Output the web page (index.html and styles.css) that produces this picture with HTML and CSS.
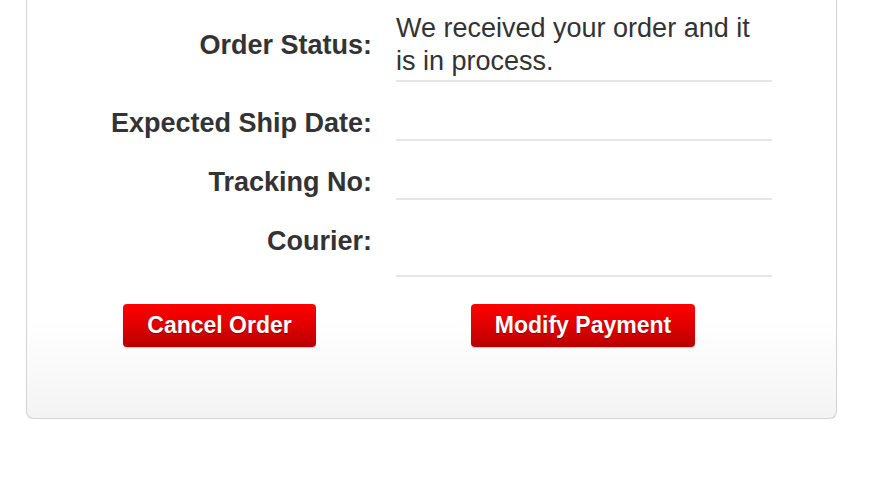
FILE: index.html
```html
<!DOCTYPE html>
<html>
<head>
    <title>Order Details</title>
<link rel="stylesheet" href="styles.css">
</head>
<body>
    <div class="panel">
        <div class="row row-first">
            <div class="label">Order Status:</div>
            <div class="value">We received your order and it is in process.</div>
        </div>
        <div class="row">
            <div class="label">Expected Ship Date:</div>
            <div class="value"></div>
        </div>
        <div class="row">
            <div class="label">Tracking No:</div>
            <div class="value"></div>
        </div>
        <div class="row row-last">
            <div class="label">Courier:</div>
            <div class="value"></div>
        </div>
        <div class="buttons">
            <button class="btn btn-cancel">Cancel Order</button>
            <button class="btn btn-modify">Modify Payment</button>
        </div>
        <div class="panel-foot"></div>
    </div>
</body>
</html>
```

FILE: styles.css
```css
body {
  margin: 0;
  font-family: "Liberation Sans", Arial, sans-serif;
  color: #333;
  background: #fff;
}

.panel {
  width: 809px;
  margin-left: 26px;
  border: 1px solid #d4d4d4;
  border-top: none;
  border-radius: 0 0 8px 8px;
  background: linear-gradient(to bottom, #fff 0, #fff 320px, #f3f3f3 100%);
  box-shadow: 0 1px 1px #e6e6e6;
}

.row {
  display: grid;
  grid-template-columns: 345px 376px;
  column-gap: 24px;
}

.label {
  font-size: 27px;
  font-weight: bold;
  line-height: 28px;
  text-align: right;
  padding-top: 27px;
}

.value {
  font-size: 27px;
  line-height: 33px;
  height: 57px;
  border-bottom: 2px solid #e6e6e6;
}

.row-first .label {
  padding-top: 31px;
}

.row-first .value {
  padding-top: 12px;
  height: 68px;
}

.row-last .value {
  height: 75px;
}

.buttons {
  display: flex;
  padding-top: 27px;
  padding-left: 96px;
}

.btn {
  height: 43px;
  border: none;
  border-radius: 4px;
  background: linear-gradient(to bottom, #ff0000 0%, #e00000 50%, #b80000 100%);
  box-shadow: 0 1px 1px #c9c9c9;
  color: #fff;
  font-family: "Liberation Sans", Arial, sans-serif;
  font-size: 23px;
  font-weight: bold;
  text-shadow: 0 1px 1px #8a0000;
  cursor: pointer;
}

.btn-cancel {
  width: 193px;
}

.btn-modify {
  width: 224px;
  margin-left: 155px;
}

.panel-foot {
  height: 19px;
  margin: 51px 18px 0 18px;
  border: 1px solid #f4f4f4;
  border-bottom: none;
}
```
